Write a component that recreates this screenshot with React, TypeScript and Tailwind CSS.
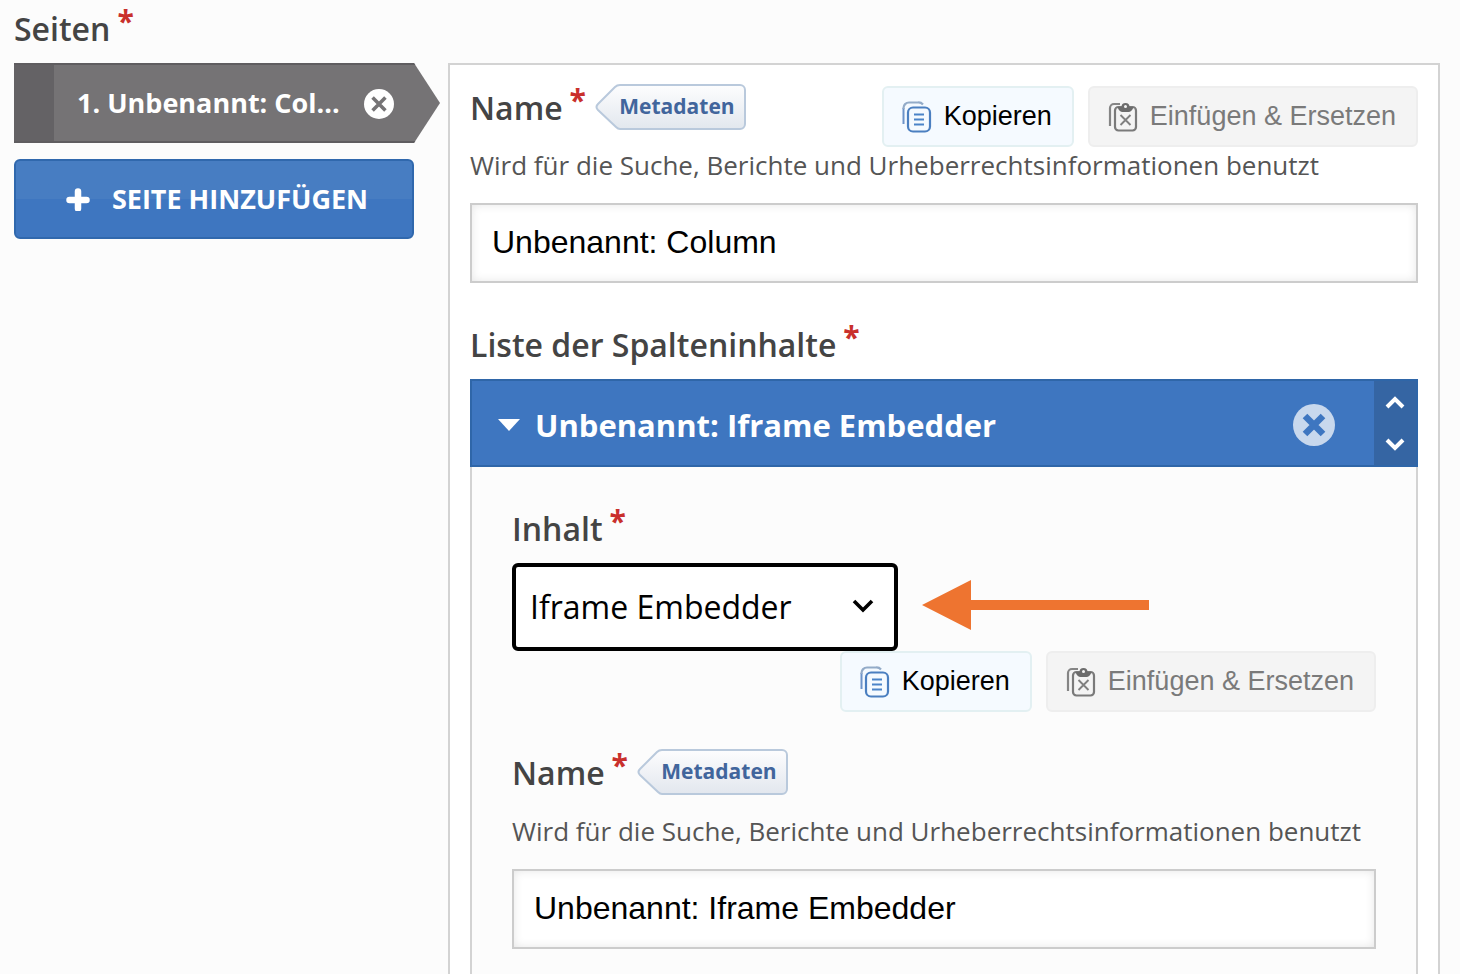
import { useId, useState } from "react";

function CopyIcon() {
  return (
    <svg width="30" height="34" viewBox="0 1 30 34" fill="none" aria-hidden="true">
      <path d="M1.500 25V9" stroke="#6d93c8" strokeWidth="2" />
      <path d="M1.500 10V9a5.500 5.500 0 0 1 5.500-5.500h9a6 6 0 0 1 5 2" stroke="#93abc8" strokeWidth="2.2" />
      <rect x="6" y="8.500" width="22" height="24" rx="5" stroke="#4b7fc0" strokeWidth="2.200" />
      <path d="M12 15.500h10M12 20.500h10M12 25.500h10" stroke="#4b83c8" strokeWidth="2" />
    </svg>
  );
}

function PasteIcon() {
  return (
    <svg width="30" height="34" viewBox="0 1 30 34" fill="none" aria-hidden="true">
      <path d="M2 27V9a4 4 0 0 1 4-4h6" stroke="#858585" strokeWidth="2.2" />
      <rect x="7" y="8" width="21" height="23.500" rx="3.500" stroke="#7a7a7a" strokeWidth="2.200" />
      <path d="M9.500 8h4a4 4 0 0 1 8 0h4c-1 3.500-3 5-5 5h-6c-2 0-4-1.500-5-5z" fill="#6c6c6c" />
      <circle cx="17.500" cy="7.500" r="1.500" fill="#f4f4f4" />
      <path d="M12.500 16l10 10M22.500 16l-10 10" stroke="#808080" strokeWidth="1.900" />
    </svg>
  );
}

function CircleX({ size, disc, cross, weight }: { size: number; disc: string; cross: string; weight: number }) {
  return (
    <svg width={size} height={size} viewBox="0 0 42 42" aria-hidden="true">
      <circle cx="21" cy="21" r="21" fill={disc} />
      <path d="M12 12l18 18M30 12l-18 18" stroke={cross} strokeWidth={weight} />
    </svg>
  );
}

function FieldLabel({ text, htmlFor }: { text: string; htmlFor?: string }) {
  const body = (
    <>
      {text}
      <span className="ml-[7px] self-start text-[30px] leading-7 font-bold text-[#c9302c]">*</span>
    </>
  );
  const style = "flex h-11 items-center text-[32px] leading-[44px] font-semibold text-[#444]";
  return htmlFor ? (
    <label htmlFor={htmlFor} className={style}>{body}</label>
  ) : (
    <h2 className={style}>{body}</h2>
  );
}

function MetadataTag() {
  const gradient = useId();
  return (
    <button type="button" className="relative -mt-0.5 ml-[9px] h-[46px] w-[152px] pl-3 text-[21px] font-bold text-[#41659c]">
      <svg className="absolute inset-0" width="152" height="46" viewBox="0 0 152 46" aria-hidden="true">
        <defs>
          <linearGradient id={gradient} x1="0" y1="0" x2="0" y2="1">
            <stop offset="0" stopColor="#fdfdfe" />
            <stop offset="1" stopColor="#e2e7ee" />
          </linearGradient>
        </defs>
        <path
          d="M25 1H145a5 5 0 0 1 5 5V40a5 5 0 0 1-5 5H25q-2 0-4-2L3 26q-3-3 0-6L20 3q2-2 5-2z"
          fill={`url(#${gradient})`}
          stroke="#b9c9dc"
          strokeWidth="2"
        />
      </svg>
      <span className="relative">Metadaten</span>
    </button>
  );
}

function ClipboardActions() {
  const base =
    "flex h-[61px] items-center gap-3 rounded-md border-2 pr-5 pl-[18px] font-['Liberation_Sans',sans-serif] text-[27px]";
  return (
    <div className="flex gap-[14px]">
      <button type="button" className={`${base} border-[#e3f0f2] bg-[#f5faff] text-black`}>
        <CopyIcon />
        Kopieren
      </button>
      <button type="button" disabled className={`${base} border-[#eeeeee] bg-[#f4f4f4] text-[#7a7a7a]`}>
        <PasteIcon />
        Einfügen &amp; Ersetzen
      </button>
    </div>
  );
}

function HelpText({ id }: { id: string }) {
  return (
    <p id={id} className="text-[26px] leading-9 whitespace-nowrap text-[#555]">
      Wird für die Suche, Berichte und Urheberrechtsinformationen benutzt
    </p>
  );
}

function TextField({ id, initial }: { id: string; initial: string }) {
  const [value, setValue] = useState(initial);
  return (
    <input
      id={id}
      type="text"
      value={value}
      onChange={(e) => setValue(e.target.value)}
      aria-describedby={`${id}-help`}
      className="mt-5 h-20 w-full border-2 border-[#ccc] bg-white px-5 pb-0.5 font-['Liberation_Sans',sans-serif] text-[32px] text-black shadow-[inset_0_0_10px_rgba(0,0,0,0.10)] outline-none"
    />
  );
}

export default function App() {
  return (
    <div className="flex min-h-screen flex-col bg-[#fcfcfc] pt-[7px] pr-5 pl-[14px] font-['Open_Sans',sans-serif]">
      <FieldLabel text="Seiten" />
      <div className="mt-3 flex flex-1 gap-2">
        <nav className="flex w-[426px] shrink-0 flex-col gap-4">
          <div className="flex h-20 items-center border-y-2 border-[#5f5d60] bg-[#757375] pr-[46px] text-[27px] font-bold text-white [clip-path:polygon(0_0,calc(100%-26px)_0,100%_50%,calc(100%-26px)_100%,0_100%)]">
            <span className="mr-[23px] h-full w-10 bg-[#646265]" />
            <a href="#seite-1" className="flex-1">1. Unbenannt: Col...</a>
            <button type="button" aria-label="Seite entfernen" className="pt-0.5">
              <CircleX size={30} disc="#fff" cross="#757375" weight={5} />
            </button>
          </div>
          <button
            type="button"
            className="mr-[26px] flex h-20 items-center justify-center gap-[22px] rounded-md border-2 border-[#3068ad] bg-linear-to-b from-[#477dc2] from-50% to-[#3e76c0] to-50% pl-1.5 text-[27px] font-bold text-white"
          >
            <svg width="24" height="24" viewBox="0 0 24 24" aria-hidden="true">
              <path d="M12 4.500v17M3.500 13h17" stroke="#fff" strokeWidth="6.500" strokeLinecap="round" />
            </svg>
            SEITE HINZUFÜGEN
          </button>
        </nav>

        <main className="flex min-w-0 flex-1 flex-col border-2 border-b-0 border-[#d3d3d3] bg-white px-5 pt-[21px]">
          <div className="flex items-start justify-between">
            <div className="flex">
              <FieldLabel text="Name" htmlFor="page-name" />
              <MetadataTag />
            </div>
            <ClipboardActions />
          </div>
          <HelpText id="page-name-help" />
          <TextField id="page-name" initial="Unbenannt: Column" />

          <div className="mt-10">
            <FieldLabel text="Liste der Spalteninhalte" />
          </div>

          <section className="mt-3 flex flex-1 flex-col">
            <header className="flex h-22 items-stretch border-2 border-[#2f66a8] bg-[#3e76c0] text-white">
              <button type="button" aria-expanded="true" className="flex flex-1 items-center gap-[15px] pt-1 pl-[26px] text-[31px] font-bold">
                <svg width="22" height="12" viewBox="0 0 22 12" aria-hidden="true">
                  <path d="M0 0h22L11 12z" fill="#fff" />
                </svg>
                Unbenannt: Iframe Embedder
              </button>
              <button type="button" aria-label="Inhalt entfernen" className="px-[39px] pt-1">
                <CircleX size={42} disc="#c8d8ed" cross="#3e76c0" weight={6.5} />
              </button>
              <div className="flex w-[42px] flex-col items-center justify-center gap-7 bg-[#3565a3]">
                <button type="button" aria-label="Nach oben">
                  <svg className="block" width="20" height="14" viewBox="0 0 20 14" fill="none" aria-hidden="true">
                    <path d="M2 12l8-8 8 8" stroke="#fff" strokeWidth="4" />
                  </svg>
                </button>
                <button type="button" aria-label="Nach unten">
                  <svg className="block" width="20" height="14" viewBox="0 0 20 14" fill="none" aria-hidden="true">
                    <path d="M2 3l8 8 8-8" stroke="#fff" strokeWidth="4" />
                  </svg>
                </button>
              </div>
            </header>

            <div className="flex-1 border-x-2 border-[#d3d3d3] bg-[#fcfcfc] px-10 pt-10 pb-5">
              <FieldLabel text="Inhalt" htmlFor="content-type" />
              <div className="mt-3 flex items-center gap-6">
                <div className="relative">
                  <select
                    id="content-type"
                    className="block h-22 w-[386px] appearance-none rounded-md border-4 border-black bg-white pr-16 pl-[14px] text-[32px] text-black outline-none"
                  >
                    <option>Iframe Embedder</option>
                  </select>
                  <svg className="pointer-events-none absolute top-9 right-6" width="22" height="16" viewBox="0 0 22 16" fill="none" aria-hidden="true">
                    <path d="M2 2l9 9 9-9" stroke="#000" strokeWidth="3.600" />
                  </svg>
                </div>
                <svg width="228" height="54" viewBox="0 0 228 54" aria-hidden="true">
                  <path d="M0 25L49 0v20h178v10H49v20z" fill="#ee7430" />
                </svg>
              </div>
              <div className="flex justify-end">
                <ClipboardActions />
              </div>
              <div className="mt-[39px] mb-[18px] flex">
                <FieldLabel text="Name" htmlFor="content-name" />
                <MetadataTag />
              </div>
              <HelpText id="content-name-help" />
              <TextField id="content-name" initial="Unbenannt: Iframe Embedder" />
            </div>
          </section>
        </main>
      </div>
    </div>
  );
}
